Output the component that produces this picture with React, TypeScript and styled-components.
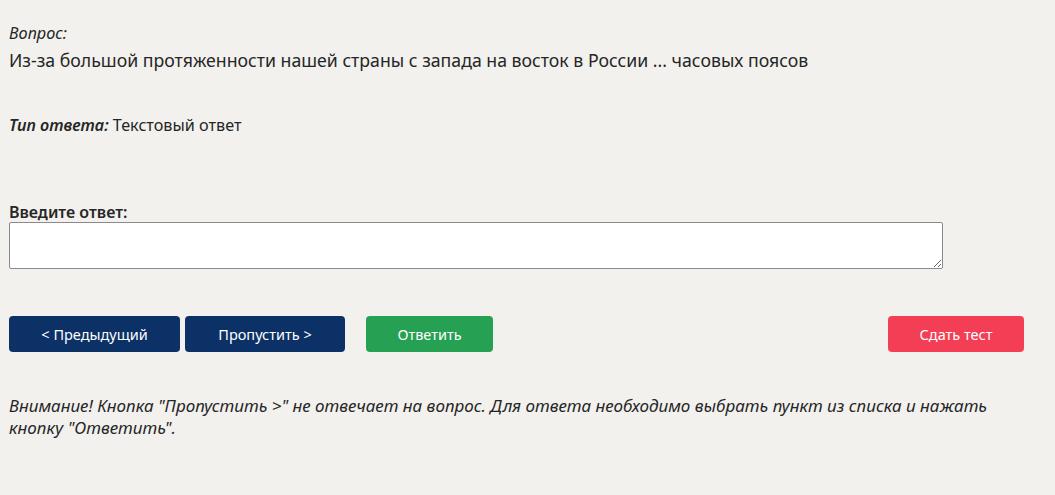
import React from "react";
import styled, { createGlobalStyle } from "styled-components";

const GlobalStyle = createGlobalStyle`
  body {
    margin: 0;
    background: #f2f1ee;
    font-family: "Noto Sans", "Open Sans", sans-serif;
    color: #262626;
  }
`;

const Page = styled.div`
  padding: 22px 9px 0 9px;
`;

const Label = styled.div`
  font-style: italic;
  font-size: 16.3px;
  line-height: 22px;
`;

const Question = styled.div`
  font-size: 17.7px;
  line-height: 26px;
  margin-top: 3px;
`;

const AnswerType = styled.div`
  font-size: 16.2px;
  line-height: 22px;
  margin-top: 41px;
  em {
    font-weight: 600;
  }
`;

const FieldLabel = styled.div`
  font-size: 16px;
  font-weight: 600;
  line-height: 20px;
  margin-top: 66px;
`;

const Answer = styled.textarea`
  display: block;
  box-sizing: border-box;
  width: 934px;
  height: 47px;
  margin: 0;
  border: 1px solid #8a8a8a;
  border-radius: 2px;
  background: #fff;
  font-family: inherit;
  font-size: 15px;
  padding: 4px 6px;
`;

const Buttons = styled.div`
  display: flex;
  align-items: center;
  margin-top: 47px;
  width: 1015px;
`;

const Button = styled.button<{ $color: string; $w: number; $gap?: number }>`
  width: ${(p) => p.$w}px;
  height: 36px;
  margin-left: ${(p) => p.$gap ?? 0}px;
  border: none;
  border-radius: 4px;
  background: ${(p) => p.$color};
  color: #fff;
  font-family: "Noto Sans", "Open Sans", sans-serif;
  font-size: 14.5px;
  cursor: pointer;
`;

const Spacer = styled.div`
  flex: 1;
`;

const Warning = styled.p`
  font-style: italic;
  font-size: 17px;
  line-height: 22px;
  margin: 43px 0 0 0;
  max-width: 1000px;
`;

export default function App() {
  return (
    <>
      <GlobalStyle />
      <Page>
        <Label>Вопрос:</Label>
        <Question>
          Из-за большой протяженности нашей страны с запада на восток в России ... часовых поясов
        </Question>
        <AnswerType>
          <em>Тип ответа:</em> Текстовый ответ
        </AnswerType>
        <FieldLabel>Введите ответ:</FieldLabel>
        <Answer />
        <Buttons>
          <Button $color="#0b3166" $w={171}>&lt; Предыдущий</Button>
          <Button $color="#0b3166" $w={160} $gap={5}>Пропустить &gt;</Button>
          <Button $color="#26a052" $w={127} $gap={21}>Ответить</Button>
          <Spacer />
          <Button $color="#f43e55" $w={136}>Сдать тест</Button>
        </Buttons>
        <Warning>
          Внимание! Кнопка "Пропустить &gt;" не отвечает на вопрос. Для ответа необходимо выбрать пункт из списка и нажать кнопку "Ответить".
        </Warning>
      </Page>
    </>
  );
}
